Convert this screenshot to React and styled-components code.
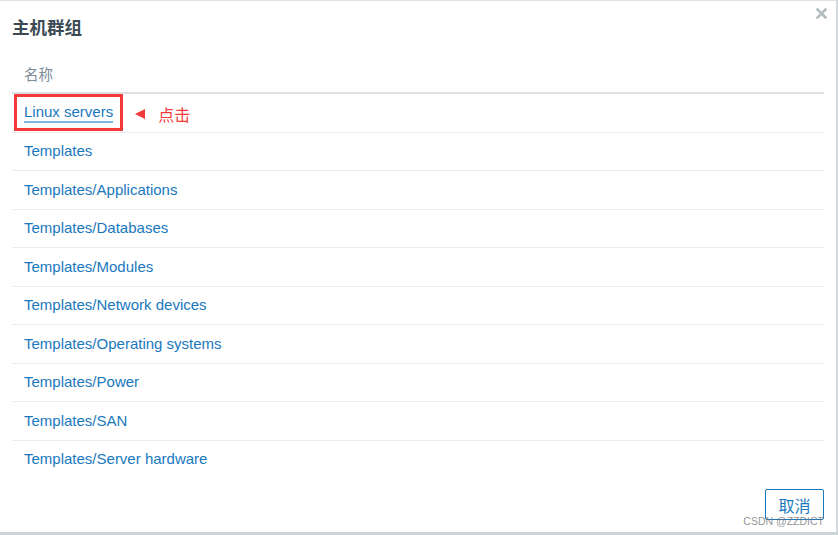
import React from "react"
import styled, { createGlobalStyle } from "styled-components"

const GlobalStyle = createGlobalStyle`
  html, body {
    margin: 0;
    padding: 0;
    background: #ffffff;
  }
  body {
    font-family: "Liberation Sans", Arial, "Noto Sans CJK SC", sans-serif;
  }
`

const Dialog = styled.div`
  position: relative;
  width: 838px;
  height: 535px;
  box-sizing: border-box;
  border-top: 1px solid #dde2e5;
  border-right: 2px solid #d3d9dc;
  border-bottom: 3px solid #cdd4d8;
  padding: 0 12px;
  display: flex;
  flex-direction: column;
  background: #fff;
`

const Title = styled.h3`
  margin: 16px 0 0;
  font-size: 17.5px;
  line-height: 22px;
  font-weight: bold;
  color: #3b4a54;
  font-family: "Liberation Sans", "Noto Sans CJK SC", sans-serif;
`

const CloseButton = styled.button`
  position: absolute;
  top: 5px;
  right: 8px;
  width: 14px;
  height: 14px;
  padding: 0;
  border: 0;
  background: none;
  display: flex;
  align-items: center;
  justify-content: center;
  cursor: pointer;
`

const Table = styled.div`
  margin-top: 16px;
  display: flex;
  flex-direction: column;
`

const HeadCell = styled.div`
  height: 39px;
  box-sizing: border-box;
  border-bottom: 2px solid #dbe0e3;
  padding-left: 12px;
  display: flex;
  align-items: center;
  font-size: 14.5px;
  color: #7a8c96;
  font-family: "Liberation Sans", "Noto Sans CJK SC", sans-serif;
`

const Row = styled.div`
  height: 38.5px;
  box-sizing: border-box;
  border-bottom: 1px solid ${p => (p.$last ? "transparent" : "#e9ecee")};
  padding: 2px 0 0 12px;
  display: flex;
  align-items: center;
`

const Link = styled.a`
  font-size: 15px;
  color: #1a78bd;
  text-decoration: none;
  line-height: 18px;
  border-bottom: ${p => (p.$active ? "2px solid #7db8de" : "none")};
  padding-bottom: ${p => (p.$active ? "0" : "2px")};
  cursor: pointer;
`

const Marked = styled.span`
  display: inline-flex;
  align-items: center;
  height: 37px;
  box-sizing: border-box;
  margin: -3px 0 0 -10px;
  padding: 2px 7px 0;
  border: 3px solid #f33a3a;
`

const Pointer = styled.span`
  margin-left: 12px;
  width: 0;
  height: 0;
  border-top: 5px solid transparent;
  border-bottom: 5px solid transparent;
  border-right: 10px solid #f33a3a;
`

const Note = styled.span`
  margin-left: 13px;
  font-size: 16px;
  color: #f33a3a;
  font-family: "Noto Sans CJK SC", sans-serif;
`

const Footer = styled.div`
  margin-top: 10px;
  display: flex;
  justify-content: flex-end;
`

const Button = styled.button`
  width: 59px;
  height: 31px;
  box-sizing: border-box;
  border: 1px solid #1a78bd;
  border-radius: 2px;
  background: #fff;
  color: #1a78bd;
  font-size: 16px;
  font-family: "Noto Sans CJK SC", sans-serif;
  padding: 0;
  cursor: pointer;
`

const Watermark = styled.span`
  position: absolute;
  right: 12px;
  bottom: 5px;
  font-size: 10.5px;
  color: rgba(110, 110, 110, 0.75);
  font-family: "Liberation Sans", Arial, sans-serif;
`

const groups = [
  "Linux servers",
  "Templates",
  "Templates/Applications",
  "Templates/Databases",
  "Templates/Modules",
  "Templates/Network devices",
  "Templates/Operating systems",
  "Templates/Power",
  "Templates/SAN",
  "Templates/Server hardware",
]

function App() {
  return (
    <>
      <GlobalStyle />
      <Dialog>
        <Title>主机群组</Title>
        <CloseButton aria-label="close">
          <svg width="11" height="11" viewBox="0 0 11 11">
            <path d="M1.5 1.5 L9.5 9.5 M9.5 1.5 L1.5 9.5" stroke="#b3bcc1" strokeWidth="2.6" strokeLinecap="square" />
          </svg>
        </CloseButton>
        <Table>
          <HeadCell>名称</HeadCell>
          {groups.map((g, i) => (
            <Row key={g} $last={i === groups.length - 1}>
              {i === 0 ? (
                <>
                  <Marked>
                    <Link $active>{g}</Link>
                  </Marked>
                  <Pointer />
                  <Note>点击</Note>
                </>
              ) : (
                <Link>{g}</Link>
              )}
            </Row>
          ))}
        </Table>
        <Footer>
          <Button>取消</Button>
        </Footer>
        <Watermark>CSDN @ZZDICT</Watermark>
      </Dialog>
    </>
  )
}

export default App
